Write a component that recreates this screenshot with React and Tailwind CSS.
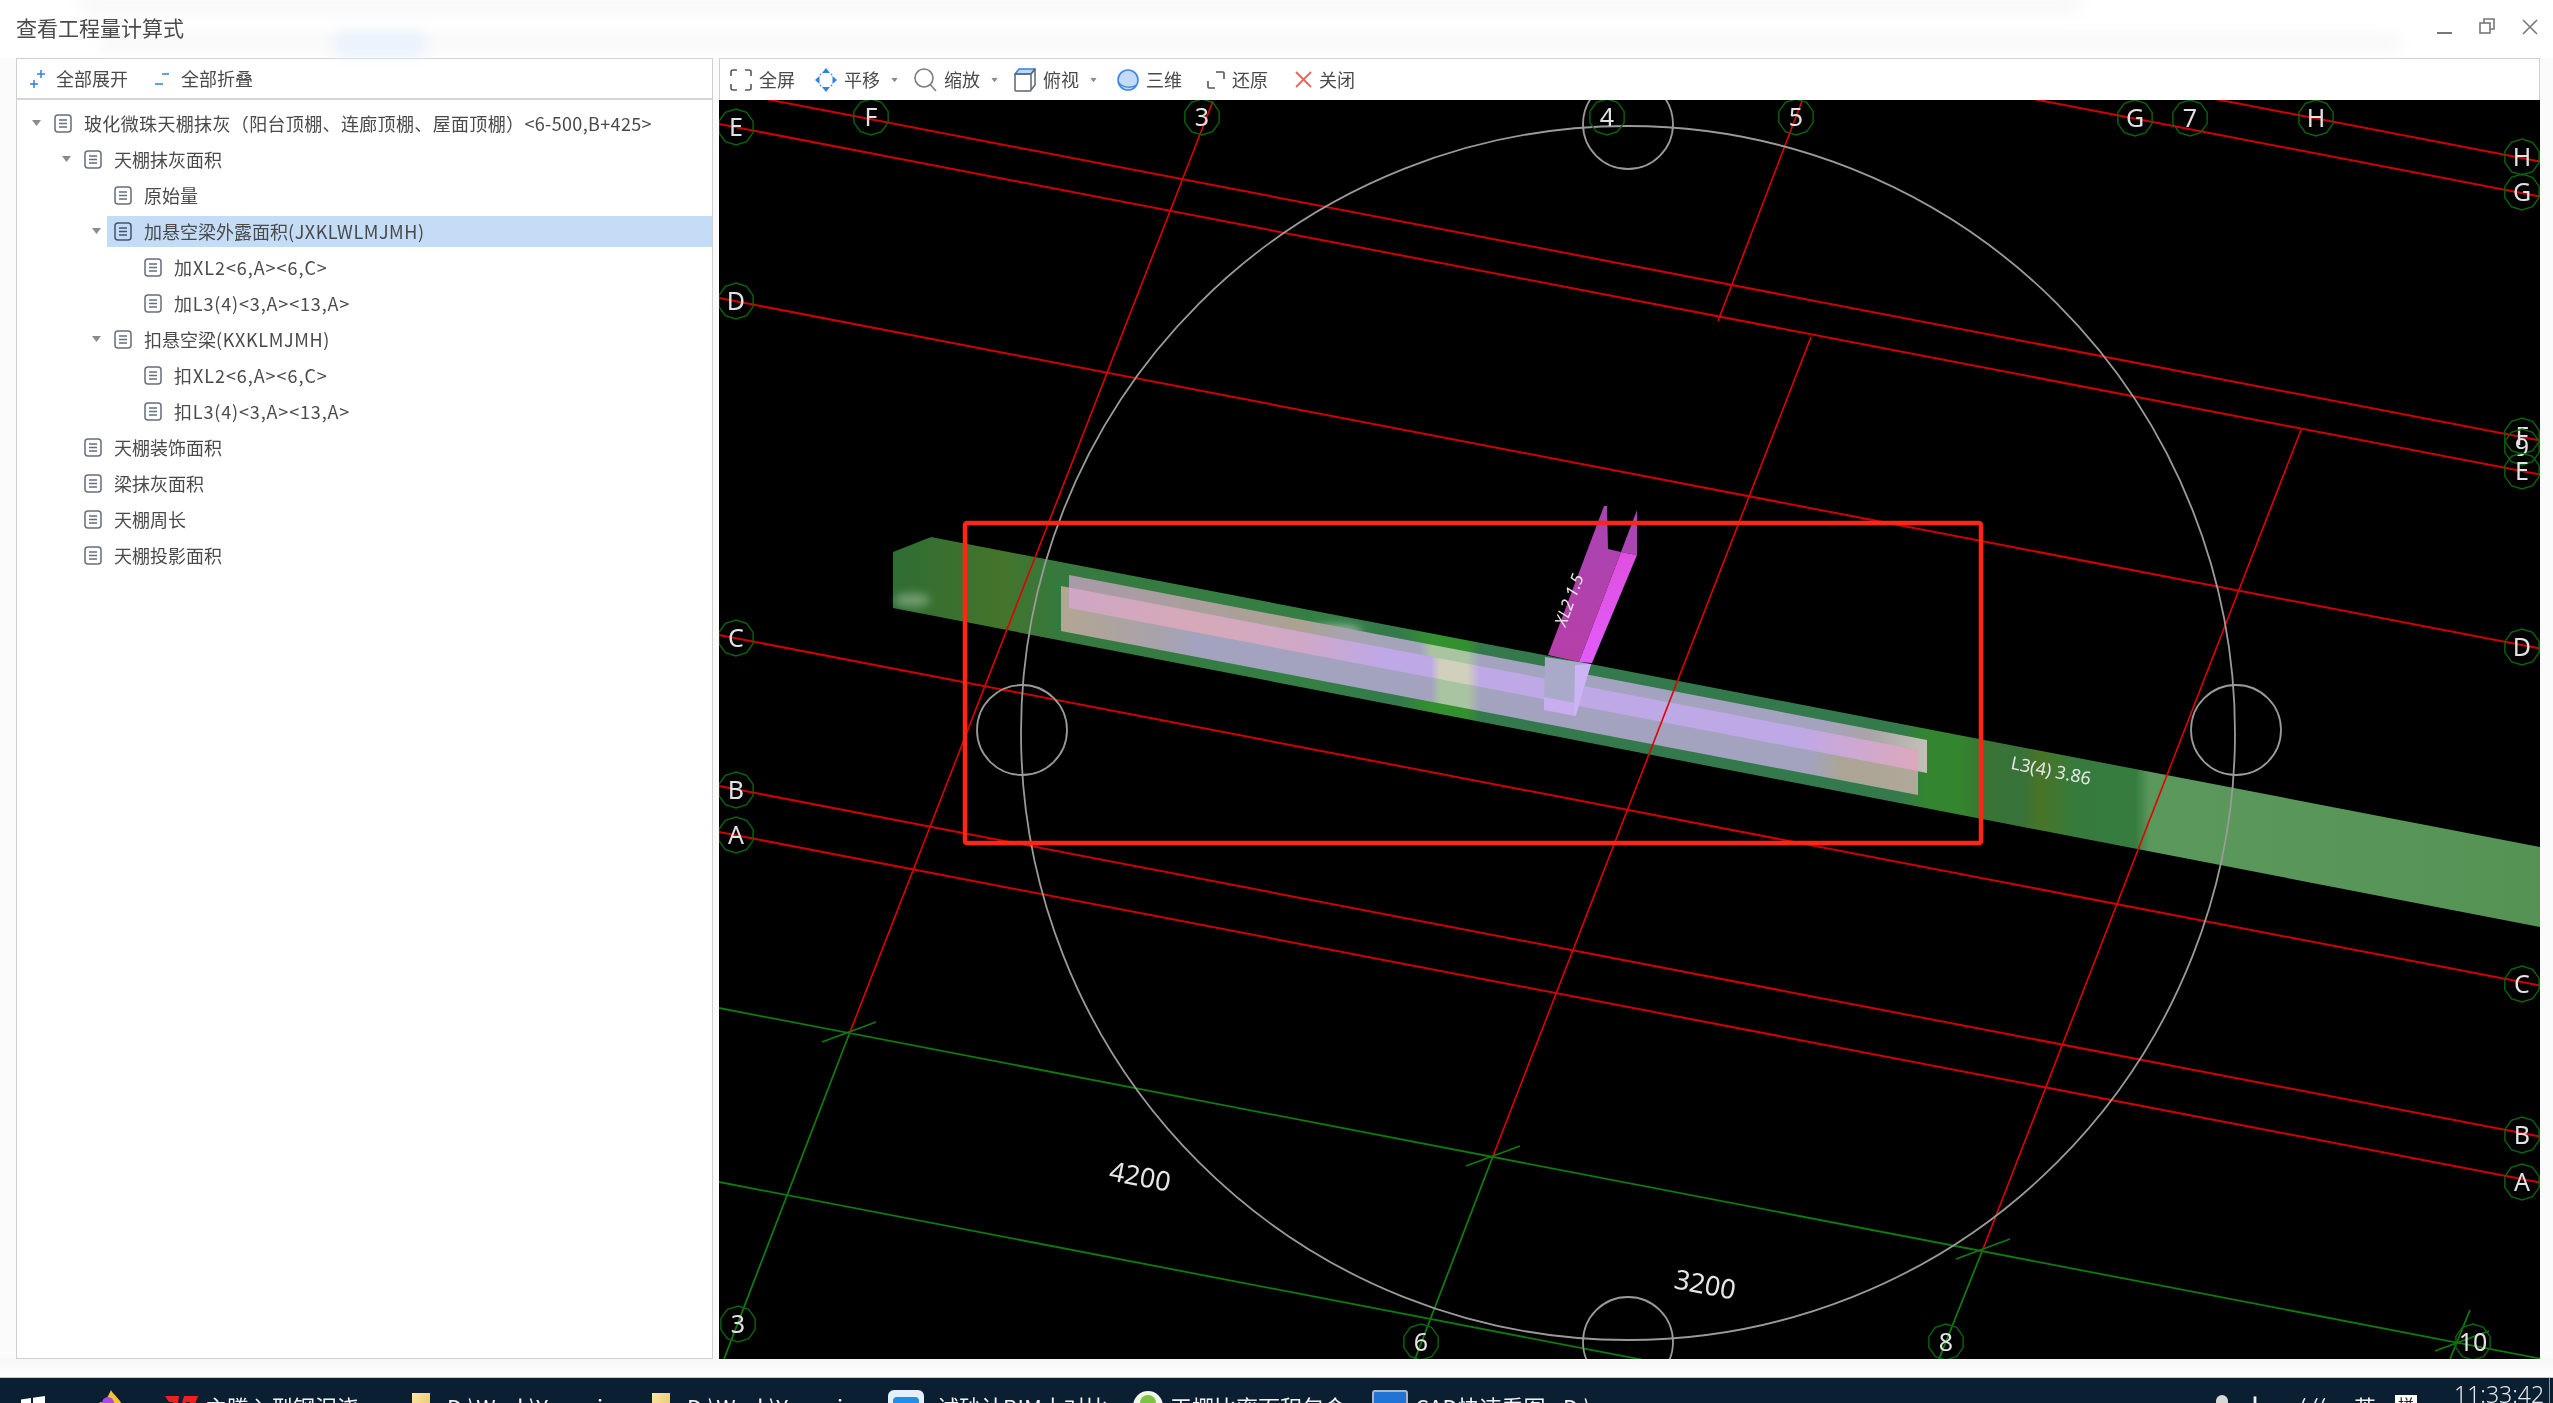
import React from 'react';

const treeRows = [
  { depth: 0, arrow: true, track: 'tracking-[0.35px]', label: '玻化微珠天棚抹灰（阳台顶棚、连廊顶棚、屋面顶棚）<6-500,B+425>' },
  { depth: 1, arrow: true, label: '天棚抹灰面积' },
  { depth: 2, label: '原始量' },
  { depth: 2, arrow: true, selected: true, label: '加悬空梁外露面积', tail: '(JXKLWLMJMH)', tailTrack: 'tracking-[0.55px]' },
  { depth: 3, track: 'tracking-[0.95px]', label: '加XL2<6,A><6,C>' },
  { depth: 3, track: 'tracking-[0.85px]', label: '加L3(4)<3,A><13,A>' },
  { depth: 2, arrow: true, label: '扣悬空梁', tail: '(KXKLMJMH)', tailTrack: 'tracking-[0.65px]' },
  { depth: 3, track: 'tracking-[0.95px]', label: '扣XL2<6,A><6,C>' },
  { depth: 3, track: 'tracking-[0.85px]', label: '扣L3(4)<3,A><13,A>' },
  { depth: 1, label: '天棚装饰面积' },
  { depth: 1, label: '梁抹灰面积' },
  { depth: 1, label: '天棚周长' },
  { depth: 1, label: '天棚投影面积' },
];

const depthPad = ['pl-[15px]', 'pl-[45px]', 'pl-[75px]', 'pl-[105px]'];

// y of every axis line where it meets the left edge of the canvas
const redAxes = [-189, -154, 90, 124, 298, 635, 786, 832];
const greenAxes = [1008, 1182];
const SLOPE = 0.1925;

const redCross = [
  [1213, 101, 850, 1032],
  [1802, 101, 1718, 321],
  [1811, 337, 1493, 1156],
  [2301, 430, 1983, 1249],
];
const greenCross = [
  [850, 1032, 724, 1359],
  [1493, 1156, 1415, 1359],
  [1983, 1249, 1939, 1359],
  [2450, 1359, 2470, 1310],
];
const ticks = [
  [822, 1042, 876, 1022],
  [1466, 1166, 1520, 1146],
  [1956, 1259, 2010, 1239],
  [2435, 1351, 2489, 1331],
];
const bubbles = [
  ['E', 736, 127], ['F', 871, 117], ['3', 1202, 117], ['4', 1607, 117], ['5', 1796, 117],
  ['G', 2135, 118], ['7', 2190, 118], ['H', 2316, 118],
  ['D', 736, 301], ['C', 736, 638], ['B', 736, 790], ['A', 736, 835],
  ['3', 738, 1324], ['6', 1421, 1342], ['8', 1946, 1342], ['10', 2473, 1342],
  ['H', 2522, 157], ['G', 2522, 192], ['F', 2522, 436], ['9', 2522, 447], ['E', 2522, 471],
  ['D', 2522, 647], ['C', 2522, 984], ['B', 2522, 1135], ['A', 2522, 1182],
];

function DocIcon({ dark }) {
  const c = dark ? '#3f5570' : '#666e7c';
  return (
    <svg width="18" height="19" viewBox="0 0 18 19" fill="none" className="shrink-0">
      <rect x="1" y="1" width="16" height="17" rx="3" stroke={c} strokeWidth="1.5" />
      <path d="M5 6h8M5 9.5h8M5 13h8" stroke={c} strokeWidth="1.5" />
    </svg>
  );
}

function Caret({ className }) {
  return (
    <svg width="9" height="6" viewBox="0 0 9 6" className={className}>
      <path d="M0 0h9L4.5 6z" fill="#8b8b8b" />
    </svg>
  );
}

function TreeRow({ row }) {
  return (
    <div className={`flex h-9 items-center ${depthPad[row.depth]}`}>
      <div className="w-[14.5px] shrink-0">{row.arrow && <Caret className="block" />}</div>
      <div className={`flex h-[31px] flex-1 items-center pl-[7.5px] ${row.selected ? 'bg-[#c5dcf6]' : ''}`}>
        <DocIcon dark={row.selected} />
        <span className={`ml-3 whitespace-nowrap ${row.track || ''}`}>
          {row.label}
          {row.tail && <span className={row.tailTrack}>{row.tail}</span>}
        </span>
      </div>
    </div>
  );
}

function Grad({ id, stops, x1 = 893, x2 = 2540 }) {
  return (
    <linearGradient id={id} gradientUnits="userSpaceOnUse" x1={x1} x2={x2} y1="0" y2="0">
      {stops.map(([x, color]) => (
        <stop key={x} offset={(x - x1) / (x2 - x1)} stopColor={color} />
      ))}
    </linearGradient>
  );
}

function Bubble({ label, x, y }) {
  const points = [];
  for (let i = 0; i < 10; i++) {
    const a = (i * Math.PI) / 5 - Math.PI / 2;
    points.push(`${x + 18 * Math.cos(a)},${y + 18 * Math.sin(a)}`);
  }
  return (
    <g>
      <polygon points={points.join(' ')} fill="none" stroke="#0a660a" strokeWidth="1.4" />
      <text x={x} y={y + 9} textAnchor="middle" className="fill-[#e2e2e2] text-[25px] font-['Noto_Sans',sans-serif]">
        {label}
      </text>
    </g>
  );
}

function Canvas() {
  return (
    <svg viewBox="719 100 1821 1259" className="block h-full w-full bg-black">
      <defs>
        <Grad
          id="beam"
          stops={[
            [893, '#2f6d33'], [1000, '#44742a'], [1060, '#35793f'], [1310, '#357f44'], [1400, '#33794c'],
            [1431, '#33902e'], [1467, '#33902e'], [1480, '#34794c'], [1900, '#34794c'], [1925, '#33852f'],
            [1960, '#33852f'], [1985, '#3a7434'], [2020, '#37723a'], [2040, '#487427'], [2075, '#367b3d'],
            [2135, '#357c3e'], [2150, '#5b985c'], [2540, '#559355'],
          ]}
        />
        <Grad
          id="backFace"
          stops={[
            [1069, '#a99aa8'], [1300, '#aba292'], [1340, '#a7a3ac'], [1420, '#a3a3c0'], [1431, '#a9c4a0'],
            [1467, '#a9c4a0'], [1480, '#a3a3c0'], [1820, '#a3a3c0'], [1870, '#a9a5a6'], [1927, '#c4bfb8'],
          ]}
        />
        <Grad
          id="frontFace"
          stops={[
            [1061, '#b3a693'], [1150, '#a9a2a8'], [1200, '#a3a3c0'], [1431, '#a3a3c0'], [1440, '#a9c4a0'],
            [1467, '#a9c4a0'], [1480, '#a3a3c0'], [1810, '#a3a3c0'], [1840, '#aba596'], [1918, '#b0a899'],
          ]}
        />
        <Grad
          id="overlap"
          stops={[
            [1069, '#cfa6c4'], [1200, '#d6a9b8'], [1300, '#d0a8c6'], [1380, '#bfa8e6'], [1431, '#bfa8e6'],
            [1440, '#d0d0bc'], [1467, '#d0d0bc'], [1480, '#bfa8e6'], [1800, '#bfa8e6'], [1860, '#cfa8d0'],
            [1918, '#dba9bb'],
          ]}
        />
        <linearGradient id="purpleDark" x1="0" x2="0" y1="0" y2="1">
          <stop offset="0" stopColor="#a944b2" />
          <stop offset="1" stopColor="#b63fa8" />
        </linearGradient>
        <linearGradient id="purpleLight" x1="0" x2="0" y1="0" y2="1">
          <stop offset="0" stopColor="#e04fdf" />
          <stop offset="1" stopColor="#e25cfb" />
        </linearGradient>
      </defs>

      {/* green beam L3 */}
      <polygon points="893,552 931,537 2540,847 2540,927 893,608" fill="url(#beam)" />
      <ellipse cx="912" cy="600" rx="18" ry="7" fill="#ffffff" opacity="0.3" className="blur-[4px]" />
      <ellipse cx="1336" cy="631" rx="26" ry="6" fill="#ffffff" opacity="0.45" className="blur-[4px]" />

      {/* purple beam XL2 */}
      <polygon points="1604,506 1607,506 1608,549 1621,552 1579,662 1548,655" fill="url(#purpleDark)" />
      <polygon points="1637,510 1637,555 1621,552" fill="#a946b0" />
      <polygon points="1621,552 1637,555 1592,663 1579,662" fill="url(#purpleLight)" />

      {/* ceiling strip over the beam */}
      <polygon points="1069,575 1927,740 1927,773 1069,608" fill="url(#backFace)" />
      <polygon points="1061,586 1918,750 1918,795 1061,631" fill="url(#frontFace)" />
      <polygon points="1069,587.5 1918,750 1918,771 1069,608" fill="url(#overlap)" />
      <polygon points="1545,657 1591,664 1576,716 1544,710" fill="#a9a9ca" />
      <polygon points="1544,697 1575,703 1575,716 1544,710" fill="#c8aeee" />
      <polygon points="1575,665 1591,664 1576,715 1574,716" fill="#cdb4f5" />

      {/* axes */}
      {redAxes.map((y) => (
        <line key={y} x1="719" y1={y} x2="2540" y2={y + 1821 * SLOPE} stroke="#d00000" strokeWidth="2" />
      ))}
      {greenAxes.map((y) => (
        <line key={y} x1="719" y1={y} x2="2540" y2={y + 1821 * SLOPE} stroke="#0f7a0f" strokeWidth="1.8" />
      ))}
      {redCross.map(([x1, y1, x2, y2]) => (
        <line key={x1} x1={x1} y1={y1} x2={x2} y2={y2} stroke="#e00000" strokeWidth="1.6" />
      ))}
      {greenCross.concat(ticks).map(([x1, y1, x2, y2]) => (
        <line key={`${x1}-${y1}`} x1={x1} y1={y1} x2={x2} y2={y2} stroke="#0f7a0f" strokeWidth="1.8" />
      ))}

      {/* column circles */}
      <g fill="none" stroke="#9a9a9a" strokeWidth="1.8">
        <circle cx="1628" cy="733" r="607" />
        <circle cx="1628" cy="124" r="45" />
        <circle cx="1022" cy="730" r="45" />
        <circle cx="2236" cy="730" r="45" />
        <circle cx="1628" cy="1342" r="45" />
      </g>

      {bubbles.map(([label, x, y]) => (
        <Bubble key={`${label}-${x}-${y}`} label={label} x={x} y={y} />
      ))}

      <g className="fill-[#e6e6e6] font-['Noto_Sans',sans-serif]">
        <text x="1140" y="1186" textAnchor="middle" transform="rotate(11 1140 1177)" className="text-[27px]">4200</text>
        <text x="1705" y="1294" textAnchor="middle" transform="rotate(11 1705 1285)" className="text-[27px]">3200</text>
        <text x="2051" y="777" textAnchor="middle" transform="rotate(11.5 2051 771)" className="text-[18px]">L3(4) 3.86</text>
        <text x="1569" y="606" textAnchor="middle" transform="rotate(-70 1569 600)" className="text-[17px] italic">XL2 1.5</text>
      </g>

      {/* red mark-up frame */}
      <rect x="965" y="523" width="1016" height="320" rx="2" fill="none" stroke="#fe2617" strokeWidth="4.5" />
    </svg>
  );
}

function Tool({ icon, label, caret, className }) {
  return (
    <div className={`flex items-center ${className}`}>
      {icon}
      <span className="ml-[7px]">{label}</span>
      {caret && <Caret className="ml-[10px] scale-75" />}
    </div>
  );
}

const toolIcons = {
  full: (
    <svg width="22" height="22" viewBox="0 0 22 22" fill="none" stroke="#555" strokeWidth="1.6">
      <path d="M1 7V3a2 2 0 0 1 2-2h4M15 1h4a2 2 0 0 1 2 2v4M21 15v4a2 2 0 0 1-2 2h-4M7 21H3a2 2 0 0 1-2-2v-4" />
    </svg>
  ),
  pan: (
    <svg width="22" height="24" viewBox="0 0 22 24">
      <path d="M11 0l4 5H7zM11 24l-4-5h8zM0 12l4.500-4v8zM22 12l-4.500 4V8z" fill="#2f80e8" />
      <path d="M5 7l1-1M16 6l1 1M17 17l-1 1M6 18l-1-1" stroke="#2f80e8" strokeWidth="1.6" />
    </svg>
  ),
  zoom: (
    <svg width="23" height="24" viewBox="0 0 23 24" fill="none" stroke="#7c7c7c" strokeWidth="1.6">
      <circle cx="10" cy="10" r="9" />
      <path d="M16.500 17l5.500 6" />
    </svg>
  ),
  top: (
    <svg width="22" height="24" viewBox="0 0 22 24" fill="none">
      <path d="M5 1h16l-4 5H1z" fill="#bcd8f7" stroke="#2f80e8" strokeWidth="1.5" strokeLinejoin="round" />
      <path d="M1 6h16v16a1 1 0 0 1-1 1H2a1 1 0 0 1-1-1zM17 6l4-5v16l-4 5" stroke="#5c6675" strokeWidth="1.5" strokeLinejoin="round" />
    </svg>
  ),
  sphere: (
    <svg width="22" height="22" viewBox="0 0 22 22">
      <circle cx="11" cy="11" r="10" fill="#c4dbf8" stroke="#3f88e6" strokeWidth="1.6" />
      <path d="M1.500 13c2 5 12 7 18 3" fill="none" stroke="#3f88e6" strokeWidth="1.5" />
    </svg>
  ),
  restore: (
    <svg width="18" height="18" viewBox="0 0 18 18" fill="none" stroke="#555" strokeWidth="1.6">
      <path d="M9 1h7a1 1 0 0 1 1 1v6M1 10v6a1 1 0 0 0 1 1h6" />
    </svg>
  ),
  close: (
    <svg width="17" height="17" viewBox="0 0 17 17" fill="none" stroke="#f2615c" strokeWidth="1.8">
      <path d="M1 1l15 15M16 1L1 16" />
    </svg>
  ),
};

function Taskbar() {
  const itemText = "mt-[17px] shrink-0 overflow-hidden whitespace-nowrap text-[22px] leading-none text-[#f2f2f2]";
  return (
    <div className="flex h-[25px] shrink-0 overflow-hidden bg-[#0b1f33]">
      <svg width="24" height="24" viewBox="0 0 24 24" className="ml-[21px] mt-[18px] shrink-0">
        <path d="M0 3.500l10-1.500v9H0zM12 1.700L24 0v11H12z" fill="#fff" />
      </svg>
      <svg width="32" height="32" viewBox="0 0 32 32" className="ml-[48px] mt-[12px] shrink-0">
        <path d="M18 0c2 5 12 10 13 22H2c0-6 3-9 6-10l4 2c1-5 4-9 6-14z" fill="#f5c23c" />
        <path d="M2 14c2 0 3 1 5 1l4 9H0z" fill="#ef7a1d" />
        <circle cx="15" cy="13" r="6" fill="#a84cd6" />
      </svg>
      <svg width="33" height="24" viewBox="0 0 33 24" className="ml-10 mt-[17px] shrink-0">
        <path d="M0 1h14l-3 22H6L8 7H4zM19 1h14l-8 22h-6l6-16h-4l-2 5h-3z" fill="#f02020" />
      </svg>
      <span className={`${itemText} ml-[7px] w-[200px]`}>主腾入型钢泥浇</span>
      <div className="ml-[7px] mt-[15px] h-6 w-[18px] shrink-0 bg-gradient-to-br from-[#fbe7a8] to-[#eabf5c]" />
      <span className={`${itemText} ml-[17px] w-[200px]`}>D:\Work\Youcai</span>
      <div className="ml-[5px] mt-[15px] h-6 w-[18px] shrink-0 bg-gradient-to-br from-[#fbe7a8] to-[#eabf5c]" />
      <span className={`${itemText} ml-[17px] w-[195px]`}>D:\Work\Youcai</span>
      <div className="ml-[6px] mt-[12px] h-9 w-9 shrink-0 rounded-[6px] bg-[#e4effa] pl-[5px] pt-[7px]">
        <div className="h-6 w-[26px] rounded-sm bg-[#1f8fe8]" />
      </div>
      <span className={`${itemText} ml-[13px] w-[190px]`}>试砂计BIM十对比</span>
      <div className="ml-[6px] mt-[13px] flex h-[30px] w-[30px] shrink-0 justify-center rounded-full bg-[#f1f6e8] pt-1">
        <div className="h-4 w-4 rounded-full bg-[#7cc243]" />
      </div>
      <span className={`${itemText} ml-[7px] w-[195px]`}>天棚比率面积包含</span>
      <div className="ml-[7px] mt-[12px] h-9 w-9 shrink-0 rounded-[3px] border-2 border-[#aab6c4] bg-[#1f74d6]" />
      <span className={`${itemText} ml-[7px] w-[300px]`}>CAD快速看图 - D:\</span>

      <div className="ml-auto flex shrink-0">
        <div className="mt-[17px] h-4 w-3 rounded-full bg-[#d8d8d8]" />
        <span className={`${itemText} ml-4 w-[30px]`}>┣━</span>
        <span className={`${itemText} ml-[25px] w-[45px]`}>(  ((</span>
        <span className={`${itemText} ml-[10px] w-[22px]`}>英</span>
        <span className="ml-[19px] mt-[17px] h-[22px] w-[22px] shrink-0 border border-white bg-white text-center text-[16px] leading-none text-[#222]">拼</span>
        <span className="ml-[37px] mt-[5px] w-[73px] shrink-0 font-['Noto_Sans',sans-serif] text-[23px] font-light leading-none text-[#e6e6e6]">11:33:42</span>
        <div className="ml-[22px] h-full w-px bg-[#8a97a5]" />
        <div className="w-[3px]" />
      </div>
    </div>
  );
}

export default function App() {
  return (
    <div className="flex h-[1403px] w-[2553px] flex-col overflow-hidden bg-[#fbfbfb] font-['Noto_Sans_CJK_SC','Noto_Sans',sans-serif] text-[18px] text-[#4a4a4a] blur-[0.5px]">
      <div className="relative flex h-[58px] shrink-0 items-center bg-white pl-4">
        <div className="absolute left-[80px] top-0 h-[10px] w-[2000px] bg-[#f3f3f3] blur-[8px]" />
        <div className="absolute left-[100px] top-[36px] h-[14px] w-[2300px] bg-[#f6f6f6] blur-[8px]" />
        <div className="absolute left-[335px] top-[32px] h-[24px] w-[90px] bg-[#eaf2fc] blur-[6px]" />
        <span className="relative pb-[2px] text-[21px]">查看工程量计算式</span>
        <div className="relative ml-auto flex items-center pr-[15px]">
          <div className="mt-[8px] h-[2px] w-[15px] bg-[#777]" />
          <svg width="16" height="16" viewBox="0 0 16 16" fill="none" stroke="#777" strokeWidth="1.6" className="ml-[27px] mb-[6px]">
            <rect x="1" y="5" width="10" height="10" />
            <path d="M5 5V1h10v10h-4" />
          </svg>
          <svg width="16" height="16" viewBox="0 0 16 16" fill="none" stroke="#777" strokeWidth="1.6" className="ml-[27px] mb-[4px]">
            <path d="M1 1l14 14M15 1L1 15" />
          </svg>
        </div>
      </div>

      <div className="flex h-[1301px] shrink-0 gap-[6px] pl-4 pr-[13px]">
        {/* Left: calculation tree */}
        <div className="flex w-[697px] shrink-0 flex-col border border-[#cfcfcf] bg-white">
          <div className="flex h-[41px] shrink-0 items-center border-b-2 border-[#d4d4d4] pl-[13px]">
            <svg width="16" height="20" viewBox="0 0 16 20" fill="none" stroke="#2f80e8" strokeWidth="1.500" className="shrink-0">
              <path d="M11 1v8M7 5h8M4 11v8M0 15h8" />
            </svg>
            <span className="ml-[10px]">全部展开</span>
            <svg width="14" height="20" viewBox="0 0 14 20" fill="none" stroke="#2f80e8" strokeWidth="1.500" className="ml-[27px] shrink-0">
              <path d="M7 5h7M0 15h8" />
            </svg>
            <span className="ml-3">全部折叠</span>
          </div>
          <div className="pt-[5px] text-[18px] leading-none">
            {treeRows.map((row) => (
              <TreeRow key={row.label} row={row} />
            ))}
          </div>
        </div>

        {/* Right: 3D view */}
        <div className="flex min-w-0 flex-1 flex-col">
          <div className="flex h-[42px] shrink-0 items-center border border-b-0 border-[#cfcfcf] bg-white pl-[10px]">
            <Tool icon={toolIcons.full} label="全屏" />
            <Tool icon={toolIcons.pan} label="平移" caret className="ml-5" />
            <Tool icon={toolIcons.zoom} label="缩放" caret className="ml-[15px]" />
            <Tool icon={toolIcons.top} label="俯视" caret className="ml-[15px]" />
            <Tool icon={toolIcons.sphere} label="三维" className="ml-[19px]" />
            <Tool icon={toolIcons.restore} label="还原" className="ml-[25px]" />
            <Tool icon={toolIcons.close} label="关闭" className="ml-[27px]" />
          </div>
          <div className="min-h-0 flex-1">
            <Canvas />
          </div>
        </div>
      </div>

      <div className="h-[19px] shrink-0 border-b border-[#c8c8c8] bg-gradient-to-b from-[#f6f6f6] to-white" />
      <Taskbar />
    </div>
  );
}
